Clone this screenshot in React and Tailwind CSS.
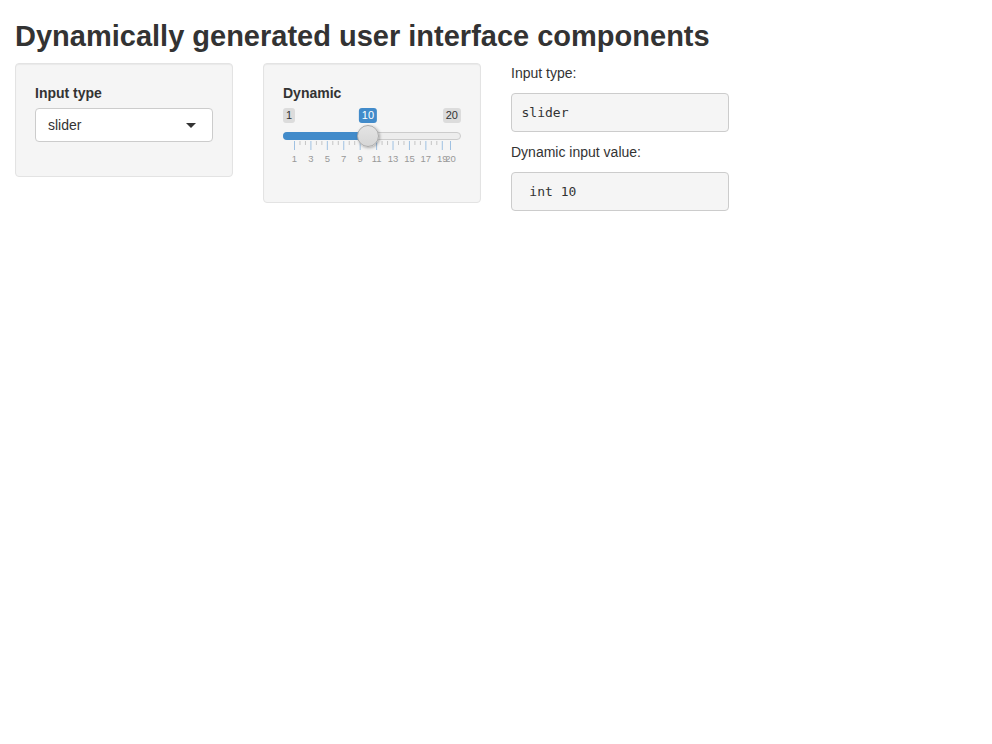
import React from "react";

const MIN = 1;
const MAX = 20;
const VALUE = 10;

// grid of the ion slider: big ticks every 2 from 1, plus the max
const bigTicks = [1, 3, 5, 7, 9, 11, 13, 15, 17, 19, 20];

function Well({ children }) {
  return (
    <div className="bg-[#f5f5f5] border border-[#e3e3e3] rounded-[4px] p-[19px] shadow-[inset_0_1px_1px_rgba(0,0,0,0.05)]">
      {children}
    </div>
  );
}

function Label({ children }) {
  return (
    <label className="inline-block mb-[5px] font-bold text-[14px] leading-[20px]">
      {children}
    </label>
  );
}

function SliderGrid({ pos }) {
  const small = [];
  for (let i = 0; i < bigTicks.length - 1; i++) {
    const a = pos(bigTicks[i]);
    const b = pos(bigTicks[i + 1]);
    if (bigTicks[i + 1] - bigTicks[i] === 2) {
      small.push(a + (b - a) / 3, a + ((b - a) * 2) / 3);
    }
  }
  return (
    <svg width="178" height="27" className="block">
      {small.map((x, i) => (
        <line key={"s" + i} x1={x + 0.5} x2={x + 0.5} y1="0" y2="4" stroke="#c4c4c4" />
      ))}
      {bigTicks.map((v) => (
        <line key={"b" + v} x1={pos(v) + 0.5} x2={pos(v) + 0.5} y1="0" y2="9" stroke="#9fc1e2" />
      ))}
      {bigTicks.map((v) => (
        <text
          key={"t" + v}
          x={pos(v) + 0.5}
          y="21"
          textAnchor="middle"
          fontSize="9.5"
          fill="#999"
          fontFamily="Liberation Sans, Arial, sans-serif"
        >
          {v}
        </text>
      ))}
    </svg>
  );
}

function Slider() {
  const pos = (v) => 11 + ((v - MIN) / (MAX - MIN)) * 156;
  const handleX = pos(VALUE);
  const chip = "text-[11px] leading-[13px] px-[3px] py-[1px] rounded-[3px]";

  return (
    <div className="flex flex-col">
      {/* min / max labels, value label above the handle */}
      <div className="relative flex justify-between">
        <span className={`bg-[#dcdcdc] text-[#333] ${chip}`}>{MIN}</span>
        <span
          className={`absolute top-0 -translate-x-1/2 bg-[#428bca] text-white ${chip}`}
          style={{ left: handleX }}
        >
          {VALUE}
        </span>
        <span className={`bg-[#dcdcdc] text-[#333] ${chip}`}>{MAX}</span>
      </div>

      {/* line, bar and handle */}
      <div className="relative mt-[9px] h-[8px] rounded-[8px] bg-[#ededed] border border-[#cccccc]">
        <div
          className="absolute -left-px -top-px h-[8px] rounded-l-[8px] bg-[#428bca]"
          style={{ width: handleX + 1 }}
        />
        <div
          className="absolute -top-[8px] w-[22px] h-[22px] rounded-full border border-[#aaaaaa] bg-[linear-gradient(#e4e4e4,#d6d6d6)] shadow-[1px_1px_3px_rgba(0,0,0,0.3)]"
          style={{ left: handleX - 12 }}
        />
      </div>

      <div className="mt-px">
        <SliderGrid pos={pos} />
      </div>
    </div>
  );
}

export default function App() {
  return (
    <div className="px-[15px] text-[#333] text-[14px] leading-[20px] font-['Liberation_Sans',Arial,sans-serif] bg-white min-h-[744px]">
      <h2 className="mt-[20px] mb-[10px] text-[29px] leading-[33px] font-bold">
        Dynamically generated user interface components
      </h2>

      <div className="flex -mx-[15px]">
        <div className="w-[248px] px-[15px]">
          <Well>
            <div className="mb-[15px]">
              <Label>Input type</Label>
              <div className="relative h-[34px] bg-white border border-[#cccccc] rounded-[4px] pl-[12px] pr-[16px] flex items-center justify-between">
                <span>slider</span>
                <span className="w-0 h-0 border-l-[5px] border-r-[5px] border-t-[5px] border-l-transparent border-r-transparent border-t-[#333]" />
              </div>
            </div>
          </Well>
        </div>

        <div className="w-[248px] px-[15px]">
          <Well>
            <div className="mb-[15px]">
              <Label>Dynamic</Label>
              <Slider />
            </div>
          </Well>
        </div>

        <div className="w-[248px] px-[15px]">
          <p className="mb-[10px]">Input type:</p>
          <pre className="mb-[10px] p-[9.5px] bg-[#f5f5f5] border border-[#cccccc] rounded-[4px] text-[13px] leading-[18px] font-['DejaVu_Sans_Mono',Menlo,monospace] whitespace-pre">
            slider
          </pre>
          <p className="mb-[10px]">Dynamic input value:</p>
          <pre className="mb-[10px] p-[9.5px] bg-[#f5f5f5] border border-[#cccccc] rounded-[4px] text-[13px] leading-[18px] font-['DejaVu_Sans_Mono',Menlo,monospace] whitespace-pre">
            {" int 10"}
          </pre>
        </div>
      </div>
    </div>
  );
}
